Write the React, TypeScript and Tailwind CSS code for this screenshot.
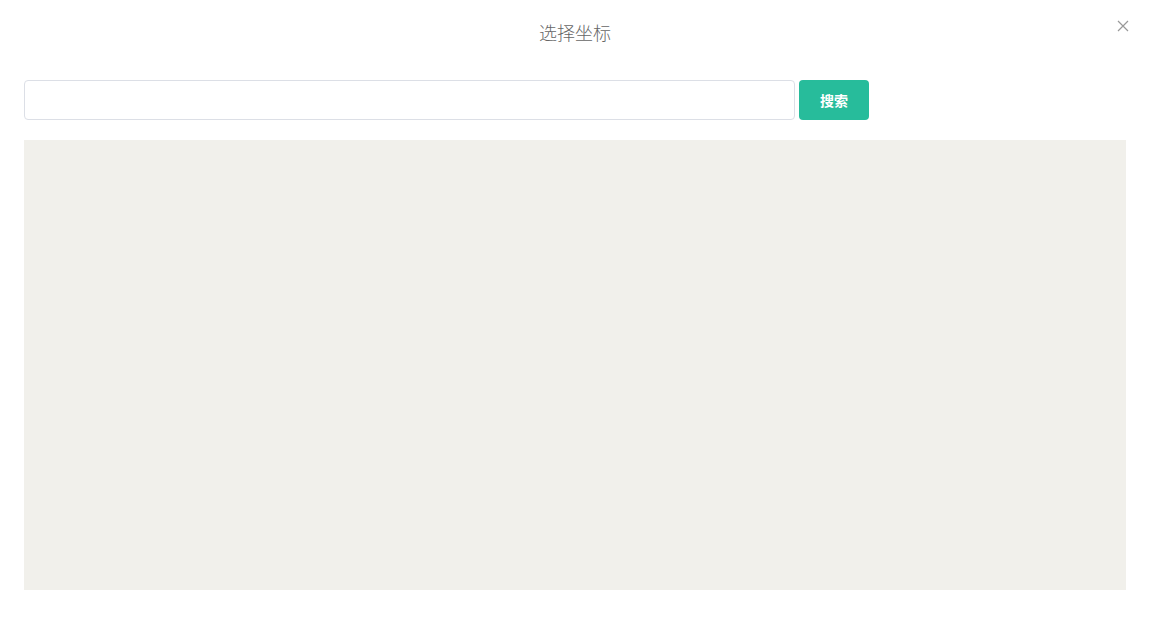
import React from "react";

const App = (): JSX.Element => {
  return (
    <div className="w-[1150px] h-[639px] bg-white font-['Noto_Sans_CJK_SC',sans-serif] relative">
      <div className="h-[64px] flex justify-center items-center">
        <h1 className="text-[18px] text-[#666] font-light">选择坐标</h1>
      </div>
      <button className="absolute top-[16px] right-[17px] w-[20px] h-[20px] flex items-center justify-center" type="button">
        <svg width="12" height="12" viewBox="0 0 12 12" stroke="#999" strokeWidth="1.2">
          <path d="M1 1L11 11M11 1L1 11" />
        </svg>
      </button>
      <div className="px-[24px] mt-[16px]">
        <div className="flex gap-[4px]">
          <input className="w-[771px] h-[40px] border border-[#dcdfe6] rounded-[4px] px-3 outline-none" type="text" />
          <button className="w-[70px] h-[40px] rounded-[4px] bg-[#27bc9b] text-white text-[14px] font-bold" type="button">
            搜索
          </button>
        </div>
        <div className="mt-[20px] w-[1102px] h-[450px] bg-[#f1f0eb]"></div>
      </div>
    </div>
  );
};

export default App;
